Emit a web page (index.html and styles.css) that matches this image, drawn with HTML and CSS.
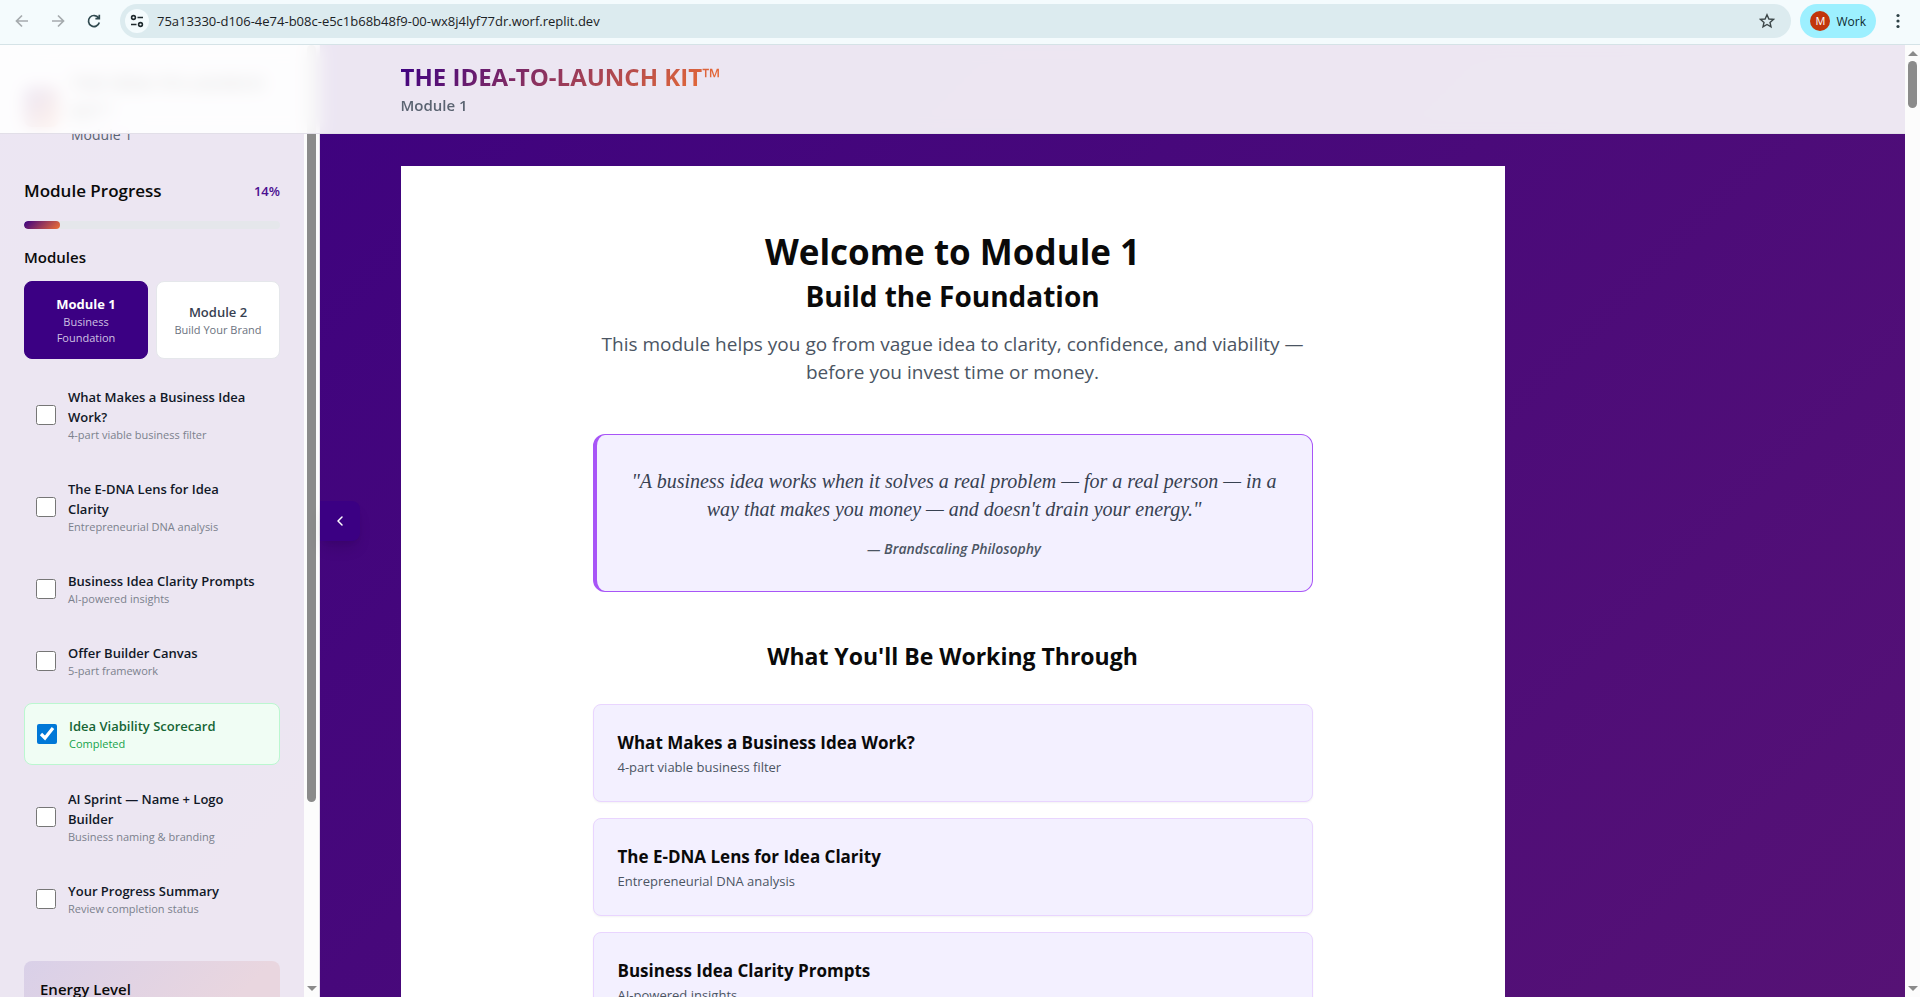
FILE: index.html
```html
<!DOCTYPE html>
<html lang="en">
<head>
<meta charset="utf-8">
<title>The Idea-to-Launch Kit</title>
<link rel="stylesheet" href="styles.css">
</head>
<body>
<div class="toolbar">
  <button class="nav-btn is-disabled" aria-label="Back"><svg viewBox="0 0 16 16"><path d="M14 8H3M8 2.500L2.500 8L8 13.500"/></svg></button>
  <button class="nav-btn is-disabled" aria-label="Forward"><svg viewBox="0 0 16 16"><path d="M2 8H13M8 2.500L13.500 8L8 13.500"/></svg></button>
  <button class="nav-btn" aria-label="Reload"><svg viewBox="0 0 16 16"><path d="M13.300 9.500A5.500 5.500 0 1 1 12.600 5M13.300 1.800V5.700H9.400"/></svg></button>
  <div class="omnibox">
    <button class="site-info" aria-label="Site information"><svg viewBox="0 0 16 16"><circle cx="4.500" cy="4.500" r="1.900"/><path d="M8.500 4.500H14M2 11.500H7.500"/><circle cx="11.500" cy="11.500" r="1.900"/></svg></button>
    <input class="url" type="text" aria-label="Address" value="75a13330-d106-4e74-b08c-e5c1b68b48f9-00-wx8j4lyf77dr.worf.replit.dev">
    <button class="star" aria-label="Bookmark"><svg viewBox="0 0 16 16"><path d="M8 1.800L9.900 6L14.400 6.400L11 9.400L12 13.900L8 11.500L4 13.900L5 9.400L1.600 6.400L6.100 6Z"/></svg></button>
  </div>
  <button class="profile"><span class="avatar">M</span>Work</button>
  <button class="menu-btn" aria-label="Menu"><svg viewBox="0 0 4 16"><circle cx="2" cy="2.500" r="1.600"/><circle cx="2" cy="8" r="1.600"/><circle cx="2" cy="13.500" r="1.600"/></svg></button>
</div>

<div class="window">
  <div class="page">
    <main class="main">
      <div class="container">
        <article class="sheet">
          <div class="content">
            <h1 class="title">Welcome to Module 1</h1>
            <h2 class="subtitle">Build the Foundation</h2>
            <p class="lead">This module helps you go from vague idea to clarity, confidence, and viability — before you invest time or money.</p>
            <blockquote class="quote">
              <p class="quote-text">"A business idea works when it solves a real problem — for a real person — in a way that makes you money — and doesn't drain your energy."</p>
              <cite class="quote-cite">— Brandscaling Philosophy</cite>
            </blockquote>
            <h3 class="section-title">What You'll Be Working Through</h3>
            <div class="cards">
              <section class="card"><h4 class="card-title">What Makes a Business Idea Work?</h4><p class="card-text">4-part viable business filter</p></section>
              <section class="card"><h4 class="card-title">The E-DNA Lens for Idea Clarity</h4><p class="card-text">Entrepreneurial DNA analysis</p></section>
              <section class="card"><h4 class="card-title">Business Idea Clarity Prompts</h4><p class="card-text">AI-powered insights</p></section>
            </div>
          </div>
        </article>
      </div>
    </main>

    <aside class="sidebar">
      <div class="side-body">
        <div class="brand">
          <span class="brand-icon"></span>
          <div><div class="brand-name">THE IDEA-TO-LAUNCH KIT™</div><div class="brand-sub">Module 1</div></div>
        </div>
        <div class="progress-head"><h2 class="progress-title">Module Progress</h2><span class="progress-value">14%</span></div>
        <div class="progress"><div class="progress-fill" style="width:14%"></div></div>
        <h3 class="side-title">Modules</h3>
        <div class="modules">
          <button class="module is-active"><span class="module-name">Module 1</span><span class="module-desc">Business Foundation</span></button>
          <button class="module"><span class="module-name">Module 2</span><span class="module-desc">Build Your Brand</span></button>
        </div>
        <div class="steps">
          <label class="step"><input class="check" type="checkbox"><span class="step-text"><span class="step-name">What Makes a Business Idea Work?</span><span class="step-desc">4-part viable business filter</span></span></label>
          <label class="step"><input class="check" type="checkbox"><span class="step-text"><span class="step-name">The E-DNA Lens for Idea Clarity</span><span class="step-desc">Entrepreneurial DNA analysis</span></span></label>
          <label class="step"><input class="check" type="checkbox"><span class="step-text"><span class="step-name">Business Idea Clarity Prompts</span><span class="step-desc">AI-powered insights</span></span></label>
          <label class="step"><input class="check" type="checkbox"><span class="step-text"><span class="step-name">Offer Builder Canvas</span><span class="step-desc">5-part framework</span></span></label>
          <label class="step is-done"><input class="check" type="checkbox" checked><span class="step-text"><span class="step-name">Idea Viability Scorecard</span><span class="step-desc">Completed</span></span></label>
          <label class="step"><input class="check" type="checkbox"><span class="step-text"><span class="step-name">AI Sprint — Name + Logo Builder</span><span class="step-desc">Business naming &amp; branding</span></span></label>
          <label class="step"><input class="check" type="checkbox"><span class="step-text"><span class="step-name">Your Progress Summary</span><span class="step-desc">Review completion status</span></span></label>
        </div>
        <div class="energy"><h3 class="energy-title">Energy Level</h3></div>
      </div>
      <div class="side-scroll"><span class="side-thumb"></span><span class="arrow-down"></span></div>
    </aside>
    <button class="collapse" aria-label="Collapse sidebar"><svg viewBox="0 0 16 16"><path d="M10 4L6 8L10 12"/></svg></button>

    <header class="header">
      <div class="container">
        <div class="header-title">THE IDEA-TO-LAUNCH KIT™</div>
        <div class="header-sub">Module 1</div>
      </div>
    </header>
  </div>
  <div class="page-scroll"><span class="arrow-up"></span><span class="page-thumb"></span><span class="arrow-down"></span></div>
</div>
</body>
</html>
```
FILE: styles.css
```css
* { box-sizing: border-box; margin: 0; }
body {
  height: 100vh;
  display: flex;
  flex-direction: column;
  overflow: hidden;
  font-family: "Segoe UI", "Open Sans", "Noto Sans", sans-serif;
  color: #0a0a0a;
}
button { font: inherit; border: 0; padding: 0; background: none; cursor: pointer; }
svg { fill: none; stroke: currentColor; display: block; }

/* Browser toolbar */
.toolbar {
  flex: none;
  display: flex;
  align-items: center;
  height: 45px;
  padding: 0 12px 2px 12px;
  background: #f4fbfd;
  border-bottom: 1px solid #d5e3e7;
}
.nav-btn { width: 20px; margin-right: 16px; color: #304a50; display: grid; place-items: center; }
.nav-btn svg { width: 16px; height: 16px; stroke-width: 1.7; }
.nav-btn.is-disabled { color: #a5abae; }
.omnibox {
  flex: 1;
  display: flex;
  align-items: center;
  height: 34px;
  margin-right: 9px;
  padding: 0 16px 0 5px;
  border-radius: 17px;
  background: #dcebef;
}
.site-info { width: 24px; height: 24px; border-radius: 50%; background: #f4fbfd; display: grid; place-items: center; color: #1f2a2e; }
.site-info svg { width: 16px; height: 16px; stroke-width: 1.6; }
.url { flex: 1; margin-left: 8px; padding: 0; border: 0; background: none; font: 13px/20px "Segoe UI", "Open Sans", sans-serif; color: #1b2225; }
.star svg { width: 16px; height: 16px; stroke-width: 1.4; color: #3c4648; }
.profile {
  display: flex;
  align-items: center;
  gap: 6px;
  height: 34px;
  padding: 0 10px;
  border-radius: 17px;
  background: #9df0ff;
  font-size: 12px;
  color: #0d2b30;
}
.avatar { width: 20px; height: 20px; border-radius: 50%; background: #c2360c; color: #fff; font-size: 11px; line-height: 20px; }
.menu-btn { width: 20px; margin-left: 12px; display: grid; place-items: center; color: #2d4045; }
.menu-btn svg { width: 4px; height: 16px; fill: currentColor; stroke: none; }

/* Page */
.window { flex: 1; min-height: 0; display: flex; }
.page {
  flex: 1;
  min-width: 0;
  display: grid;
  grid-template-columns: 320px minmax(0, 1fr);
  grid-template-rows: auto minmax(0, 1fr);
  background: linear-gradient(135deg, #3b0080, #561275);
}
.header {
  grid-area: 1 / 1 / 2 / 3;
  z-index: 3;
  padding: 16px 0;
  background: rgba(255, 255, 255, 0.9);
  border-bottom: 1px solid #e2dfe8;
  backdrop-filter: blur(8px);
}
.container { max-width: 1152px; margin: 0 auto; padding: 0 24px; }
.header-title {
  width: fit-content;
  font-size: 24px;
  line-height: 32px;
  font-weight: 700;
  background: linear-gradient(135deg, #3b0083, #f07033);
  background-clip: text;
  color: transparent;
}
.header-sub { font-size: 15px; line-height: 24px; font-weight: 600; color: #5b6472; }

.main { grid-area: 2 / 1 / 3 / 3; padding-top: 32px; overflow: hidden; }
.sheet { padding: 64px 0; background: #fff; }
.content { max-width: 720px; margin: 0 auto; text-align: center; }
.title { font-size: 35px; line-height: 44px; margin-bottom: 4px; }
.subtitle { font-size: 28px; line-height: 36px; margin-bottom: 16px; }
.lead { font-size: 19px; line-height: 28px; color: #4b5563; margin-bottom: 48px; }
.quote {
  margin-bottom: 48px;
  padding: 32px;
  border: 1px solid #a855f7;
  border-left-width: 4px;
  border-radius: 12px;
  background: #f3f0ff;
}
.quote-text { font: italic 20px/28px Georgia, "Liberation Serif", serif; color: #374151; margin-bottom: 16px; }
.quote-cite { display: block; font-size: 14px; line-height: 20px; font-weight: 600; color: #4b5563; }
.section-title { font-size: 23px; line-height: 32px; margin-bottom: 32px; }
.cards { display: grid; gap: 16px; text-align: left; }
.card { padding: 24px; border: 1px solid #e9d5ff; border-radius: 8px; background: #f3f0ff; box-shadow: 0 1px 2px rgba(0, 0, 0, 0.05); }
.card-title { font-size: 17px; line-height: 28px; }
.card-text { font-size: 13px; line-height: 20px; color: #4b5563; }

/* Sidebar */
.sidebar {
  grid-area: 1 / 1 / 3 / 2;
  z-index: 1;
  display: flex;
  overflow: hidden;
  background: rgba(255, 255, 255, 0.9);
  border-right: 1px solid #e2dbea;
}
.side-body { flex: 1; padding: 24px; }
.brand { display: flex; align-items: center; gap: 12px; height: 76px; margin-bottom: 32px; }
.brand-icon { flex: none; width: 35px; height: 40px; border-radius: 8px; background: linear-gradient(135deg, #3b0083, #f07033); }
.brand-name { font-size: 18px; line-height: 28px; font-weight: 700; }
.brand-sub { font-size: 14px; line-height: 20px; color: #5b6472; }
.progress-head { display: flex; justify-content: space-between; align-items: center; margin-bottom: 16px; }
.progress-title { font-size: 17px; line-height: 28px; font-weight: 600; }
.progress-value { font-size: 13px; line-height: 20px; font-weight: 600; color: #4b0f91; }
.progress { height: 8px; border-radius: 4px; background: #e5e7eb; margin-bottom: 16px; overflow: hidden; }
.progress-fill { height: 8px; border-radius: 4px; background: linear-gradient(135deg, #3b0083, #f07033); }
.side-title { font-size: 15px; line-height: 24px; font-weight: 600; margin-bottom: 12px; }
.modules { display: grid; grid-template-columns: 1fr 1fr; gap: 8px; margin-bottom: 16px; }
.module { padding: 12px; border: 1px solid #e5e7eb; border-radius: 8px; background: #fff; color: #374151; }
.module.is-active { background: #3b0083; border-color: #3b0083; color: #fff; }
.module-name { display: block; font-size: 13px; line-height: 20px; font-weight: 600; }
.module-desc { display: block; font-size: 11px; line-height: 16px; color: #6b7280; }
.is-active .module-name { font-weight: 700; }
.is-active .module-desc { color: #cfc0e2; }
.steps { display: grid; gap: 12px; margin-bottom: 32px; }
.step { display: flex; align-items: center; gap: 12px; padding: 12px 20px 12px 12px; border-radius: 8px; }
.step.is-done { border: 1px solid #bbf7d0; background: #f0fdf4; }
.check { flex: none; width: 20px; height: 20px; margin: 0; accent-color: #0078d7; }
.step-name { display: block; font-size: 13px; line-height: 20px; font-weight: 600; color: #111827; }
.step-desc { display: block; font-size: 11px; line-height: 16px; color: #7b818d; }
.is-done .step-name { color: #166534; }
.is-done .step-desc { color: #16a34a; }
.energy { height: 160px; padding: 16px; border-radius: 8px; background: linear-gradient(135deg, #d9d0e8, #e9d6df 60%); }
.energy-title { font-size: 15px; line-height: 24px; font-weight: 600; }

/* Scroll bars */
.side-scroll, .page-scroll {
  flex: none;
  width: 15px;
  display: flex;
  flex-direction: column;
  align-items: center;
  justify-content: space-between;
  background: #fcfcfc;
  padding-bottom: 6px;
}
.side-thumb { width: 9px; height: 80%; border-radius: 5px; background: #8b8b8b; }
.page-thumb { width: 9px; height: 47px; margin: 5px 0 auto; border-radius: 5px; background: #8b8b8b; }
.arrow-up, .arrow-down { border: 5px solid transparent; }
.arrow-up { margin-top: 6px; border-top: 0; border-bottom-color: #8b8b8b; }
.arrow-down { border-bottom: 0; border-top-color: #8b8b8b; }

.collapse {
  grid-area: 1 / 2 / 3 / 3;
  place-self: center start;
  z-index: 2;
  width: 40px;
  height: 40px;
  display: grid;
  place-items: center;
  border-radius: 0 8px 8px 0;
  background: #3b0083;
  color: #fff;
  box-shadow: 0 10px 15px -3px rgba(0, 0, 0, 0.1), 0 4px 6px -4px rgba(0, 0, 0, 0.1);
}
.collapse svg { width: 16px; height: 16px; stroke-width: 1.5; stroke-linecap: round; stroke-linejoin: round; }
```
